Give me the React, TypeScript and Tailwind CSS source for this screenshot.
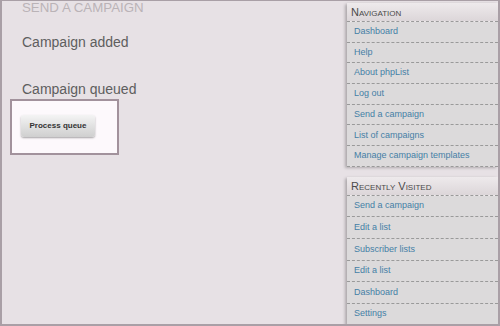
import React from 'react';

const navLinks = [
  'Dashboard',
  'Help',
  'About phpList',
  'Log out',
  'Send a campaign',
  'List of campaigns',
  'Manage campaign templates',
];

const recentLinks = [
  'Send a campaign',
  'Edit a list',
  'Subscriber lists',
  'Edit a list',
  'Dashboard',
  'Settings',
];

// boîte latérale avec en-tête en petites capitales
const SideBox = ({ title, links, row }: { title: string; links: string[]; row: string }) => (
  <div className="bg-[#dcdadb] shadow-[-2px_1px_3px_rgba(0,0,0,0.25)] rounded-tl-[2px]">
    <div className="h-[19px] flex items-center pl-[4px] pt-[1px] bg-gradient-to-b from-[#eeeaec] to-[#dcd6d9] border-b border-dashed border-[#9a9a9a] text-[#4a4a4a] text-[11px] [font-variant:small-caps] leading-none">
      {title}
    </div>
    {links.map((l, i) => (
      <div
        key={i}
        className={`${row} flex items-center pl-[7px] border-b border-dashed border-[#9a9a9a] text-[#4580a6] text-[9px]`}
      >
        {l}
      </div>
    ))}
  </div>
);

export default function App() {
  return (
    <div className="w-[500px] h-[326px] overflow-hidden bg-[#e7e1e5] border-l-2 border-r-2 border-b-2 border-t border-[#a99fa6] flex font-['Liberation_Sans',Arial,sans-serif]">
      <div className="flex-1">
        <div className="pl-[20px] text-[#bab3b7] text-[13.3px] leading-none uppercase">Send a campaign</div>
        <div className="pl-[20px] mt-[21px] text-[#5e5e5e] text-[14px] leading-none">Campaign added</div>
        <div className="pl-[20px] mt-[33px] text-[#5e5e5e] text-[14px] leading-none">Campaign queued</div>
        <div className="ml-[8px] mt-[3px] w-[109px] h-[56px] border-2 border-[#a2929c] bg-[#fdf9fc] pt-[10px] pl-[9px]">
          <button className="w-[74px] h-[22px] rounded-[3px] bg-gradient-to-b from-[#f4f4f4] to-[#cfcfcf] shadow-[0_1px_2px_rgba(0,0,0,0.35)] text-[8px] font-bold text-[#333]">
            Process queue
          </button>
        </div>
      </div>
      <div className="w-[151px] pt-[2px] flex flex-col gap-[10px]">
        <SideBox title="Navigation" links={navLinks} row="h-[20.7px]" />
        <SideBox title="Recently Visited" links={recentLinks} row="h-[21.6px]" />
      </div>
    </div>
  );
}
